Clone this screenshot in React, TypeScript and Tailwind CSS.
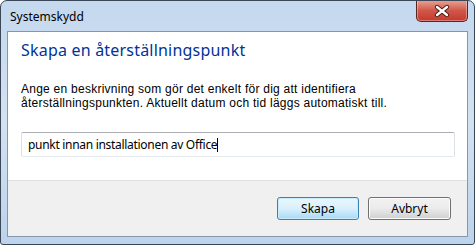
import React from "react";

export default function App() {
  const font = { fontFamily: '"Segoe UI", "Noto Sans", "Liberation Sans", sans-serif' };
  const body = { fontFamily: '"Liberation Sans", Arial, sans-serif' };
  return (
    <div className="w-[475px] h-[245px] bg-white" style={font}>
      <div className="w-[475px] h-[245px] flex flex-col border border-[#3b4656] rounded-t-[7px] rounded-b-[3px] bg-gradient-to-b from-[#c4d8ee] via-[#d3e2f2] to-[#bcd3ec] px-[6px] pb-[7px] overflow-hidden">
        <div className="h-[30px] flex items-start relative">
          <div className="pl-[3px] pt-[8px] text-[12px] leading-[16px] text-black">Systemskydd</div>
          <div className="absolute right-[0px] top-[-1px] w-[52px] h-[22px] rounded-b-[5px] border border-[#5a2420] border-t-0 bg-gradient-to-b from-[#e8a596] via-[#d0574a] to-[#c4392c] flex items-center justify-center shadow-[inset_0_0_0_1px_rgba(255,255,255,0.35)]">
            <svg width="16" height="12" viewBox="0 0 16 12">
              <path d="M3 2 L13 10 M13 2 L3 10" stroke="#4a1a16" strokeWidth="4.2" strokeLinecap="round" />
              <path d="M3 2 L13 10 M13 2 L3 10" stroke="#ffffff" strokeWidth="2.4" strokeLinecap="round" />
            </svg>
          </div>
        </div>
        <div className="flex-1 flex flex-col border border-[#8796a8] bg-white">
          <div className="h-[149px] bg-white px-[13px] pt-[8px] border-b border-[#dfdfdf]">
            <div className="text-[16px] leading-[21px] tracking-[0.2px] text-[#003399]">Skapa en återställningspunkt</div>
            <div className="mt-[21px] text-[12px] leading-[14px] tracking-[0.25px] text-black" style={body}>
              Ange en beskrivning som gör det enkelt för dig att identifiera
              <br />
              återställningspunkten. Aktuellt datum och tid läggs automatiskt till.
            </div>
            <div className="mt-[22px] w-[434px] h-[25px] border border-[#abadb3] border-b-[#e3e9ef] border-x-[#dbdfe6] rounded-[2px] flex items-center pl-[6px] text-[12px] tracking-[-0.3px] text-black">
              <span>punkt innan installationen av Office</span>
              <span className="inline-block w-[1px] h-[14px] bg-black" />
            </div>
          </div>
          <div className="flex-1 bg-[#f0f0f0] flex justify-end items-start pt-[16px] pr-[16px] gap-[9px]">
            <div className="w-[82px] h-[23px] rounded-[3px] border border-[#3c7fb1] bg-gradient-to-b from-[#eaf6fd] via-[#d9f0fc] to-[#a7d9f5] shadow-[inset_0_0_0_1px_#c8ecfb] flex items-center justify-center text-[12px] text-black">
              Skapa
            </div>
            <div className="w-[83px] h-[23px] rounded-[3px] border border-[#707070] bg-gradient-to-b from-[#f2f2f2] via-[#ebebeb] to-[#cfcfcf] shadow-[inset_0_0_0_1px_#fcfcfc] flex items-center justify-center text-[12px] text-black">
              Avbryt
            </div>
          </div>
        </div>
      </div>
    </div>
  );
}
